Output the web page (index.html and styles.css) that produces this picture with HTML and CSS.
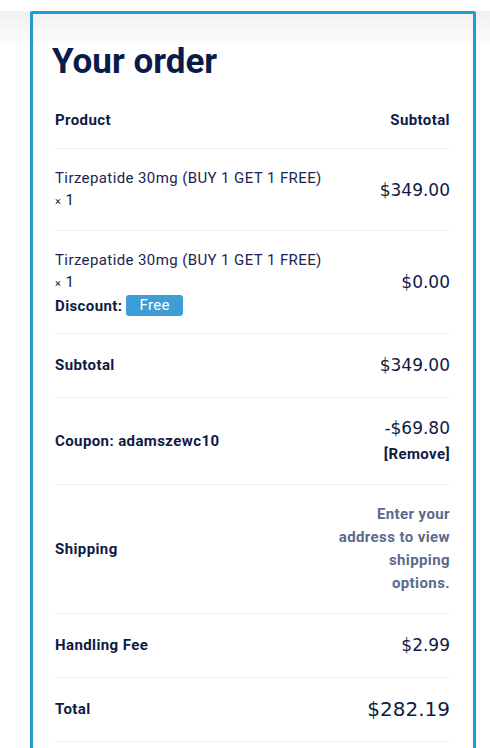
FILE: index.html
```html
<!DOCTYPE html>
<html lang="en">
<head>
<meta charset="utf-8">
<title>Your order</title>
<link rel="stylesheet" href="styles.css">
</head>
<body>
<div class="order-card">
  <h3 class="order-title">Your order</h3>
  <table class="order-table">
    <thead>
      <tr>
        <th class="col-name">Product</th>
        <th class="col-total">Subtotal</th>
      </tr>
    </thead>
    <tbody>
      <tr class="item">
        <td class="col-name">
          <div class="item-name">Tirzepatide 30mg (BUY 1 GET 1 FREE)</div>
          <div class="item-qty"><span class="times">×</span> 1</div>
        </td>
        <td class="col-total"><div class="price">$349.00</div></td>
      </tr>
      <tr class="item">
        <td class="col-name">
          <div class="item-name">Tirzepatide 30mg (BUY 1 GET 1 FREE)</div>
          <div class="item-qty"><span class="times">×</span> 1</div>
          <div class="item-meta"><span class="meta-label">Discount:</span> <span class="badge">Free</span></div>
        </td>
        <td class="col-total"><div class="price">$0.00</div></td>
      </tr>
    </tbody>
    <tfoot>
      <tr class="total-row">
        <th class="col-name">Subtotal</th>
        <td class="col-total"><div class="price">$349.00</div></td>
      </tr>
      <tr class="total-row coupon">
        <th class="col-name">Coupon: adamszewc10</th>
        <td class="col-total">
          <div class="price">-$69.80</div>
          <div class="remove">[Remove]</div>
        </td>
      </tr>
      <tr class="total-row shipping">
        <th class="col-name">Shipping</th>
        <td class="col-total"><div class="ship-note">Enter your address to view shipping options.</div></td>
      </tr>
      <tr class="total-row">
        <th class="col-name">Handling Fee</th>
        <td class="col-total"><div class="price">$2.99</div></td>
      </tr>
      <tr class="total-row grand">
        <th class="col-name">Total</th>
        <td class="col-total"><div class="price big">$282.19</div></td>
      </tr>
    </tfoot>
  </table>
</div>
</body>
</html>
```
FILE: styles.css
```css
html, body {
  margin: 0;
  padding: 0;
}
body {
  font-family: Roboto, "Liberation Sans", sans-serif;
  color: #0f1b45;
  background: #fff linear-gradient(to bottom, #fff 0, #fff 11px, #efefef 11px, #fff 48px) no-repeat;
  height: 748px;
  overflow: hidden;
}
.order-card {
  margin: 11px 0 0 30px;
  border: 3px solid #1d9dd2;
  border-bottom: none;
  border-radius: 3px 3px 0 0;
  padding: 27px 23px 0 22px;
  box-sizing: content-box;
  width: 395px;
  min-height: 800px;
}
.order-title {
  margin: 0 0 9px -3px;
  font-size: 35px;
  line-height: 42px;
  font-weight: 700;
  color: #0c1a4a;
}
.order-table {
  width: 100%;
  border-collapse: collapse;
  letter-spacing: 0.4px;
}
.order-table th,
.order-table td {
  padding: 17px 0;
  border-bottom: 1px solid #eceef3;
  vertical-align: middle;
  font-size: 15px;
  line-height: 22px;
}
.order-table th {
  font-weight: 700;
}
.col-name { text-align: left; }
.col-total { text-align: right; }
.order-table tbody td {
  padding: 18px 0 17px;
}
.order-table tfoot th,
.order-table tfoot td {
  padding: 18px 0;
}
.item-name {
  font-weight: 400;
  color: #1a2550;
  height: 22px;
}
.item-qty {
  font-weight: 400;
  height: 24px;
}
.item-qty .times {
  font-size: 11px;
}
.item-meta {
  display: flex;
  align-items: center;
  gap: 4px;
  height: 21px;
}
.meta-label {
  font-weight: 700;
}
.badge {
  display: inline-block;
  background: #3d9dd6;
  color: #fff;
  border-radius: 3px;
  padding: 0 13px;
  line-height: 21px;
  height: 21px;
}
.price {
  display: block;
  font-family: "DejaVu Sans", Roboto, sans-serif;
  font-size: 17px;
  line-height: 27px;
  letter-spacing: 0;
  color: #0f1b45;
}
.price.big {
  font-size: 20px;
}
.total-row th,
.total-row td {
  line-height: 27px;
}
.coupon .price { line-height: 24px; }
.remove {
  font-weight: 700;
  line-height: 24px;
  padding-top: 2px;
}
.ship-note {
  display: block;
  width: 116px;
  margin-left: auto;
  font-weight: 700;
  color: #5b6a8d;
  line-height: 23px;
}
```
